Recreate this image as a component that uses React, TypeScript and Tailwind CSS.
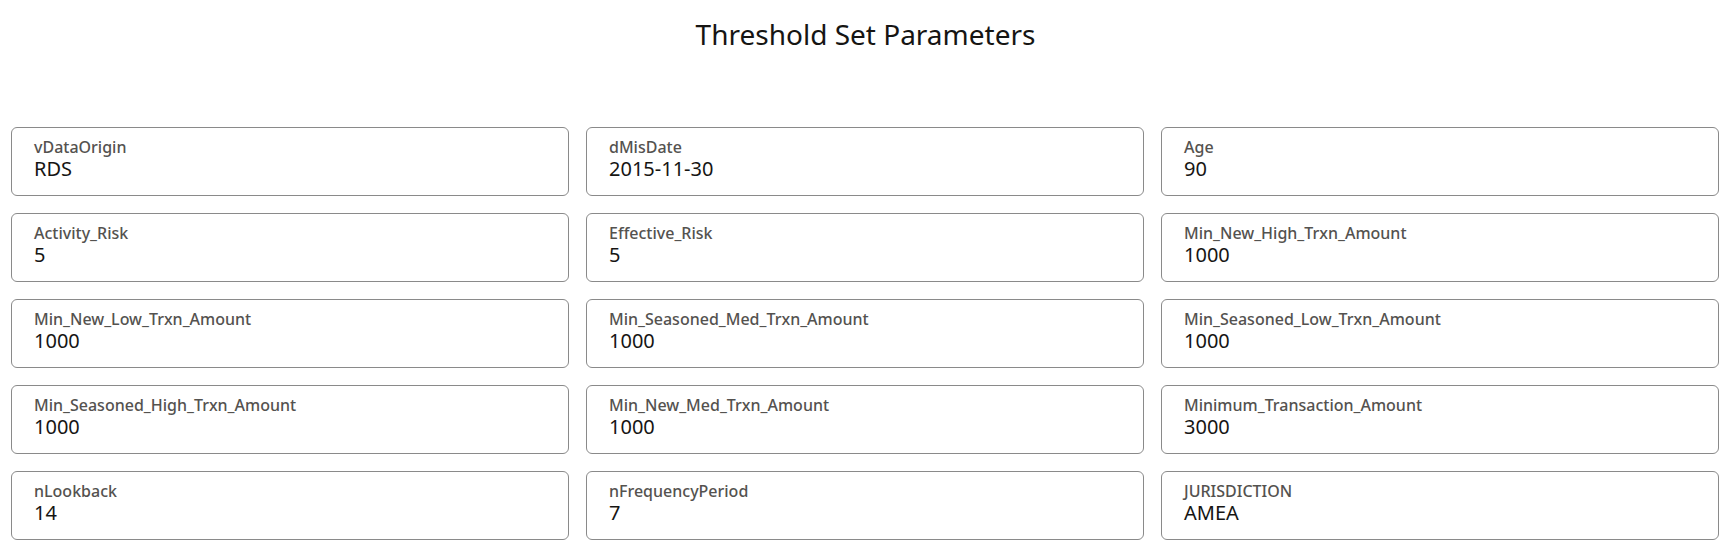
import React from "react";

const items: [string, string][] = [
  ["vDataOrigin", "RDS"],
  ["dMisDate", "2015-11-30"],
  ["Age", "90"],
  ["Activity_Risk", "5"],
  ["Effective_Risk", "5"],
  ["Min_New_High_Trxn_Amount", "1000"],
  ["Min_New_Low_Trxn_Amount", "1000"],
  ["Min_Seasoned_Med_Trxn_Amount", "1000"],
  ["Min_Seasoned_Low_Trxn_Amount", "1000"],
  ["Min_Seasoned_High_Trxn_Amount", "1000"],
  ["Min_New_Med_Trxn_Amount", "1000"],
  ["Minimum_Transaction_Amount", "3000"],
  ["nLookback", "14"],
  ["nFrequencyPeriod", "7"],
  ["JURISDICTION", "AMEA"],
];

export default function App() {
  return (
    <div
      className="w-[1723px] h-[553px] bg-white overflow-hidden"
      style={{ fontFamily: '"Noto Sans", "Open Sans", sans-serif' }}
    >
      <h1 className="pt-[14px] h-[127px] pl-[12px] pr-[4px] text-center text-[28px] leading-[40px] text-[#161513]">
        Threshold Set Parameters
      </h1>
      <div className="grid grid-cols-3 gap-x-[17px] gap-y-[17px] pl-[11px] pr-[4px]">
        {items.map(([label, value]) => (
          <div
            key={label}
            className="h-[69px] rounded-[6px] border border-[#8a8a8a] pl-[22px] pt-[10px]"
          >
            <div className="text-[16px] leading-[18px] font-medium text-[#54524f]">{label}</div>
            <div className="text-[20px] leading-[26px] text-[#161513]">{value}</div>
          </div>
        ))}
      </div>
    </div>
  );
}
